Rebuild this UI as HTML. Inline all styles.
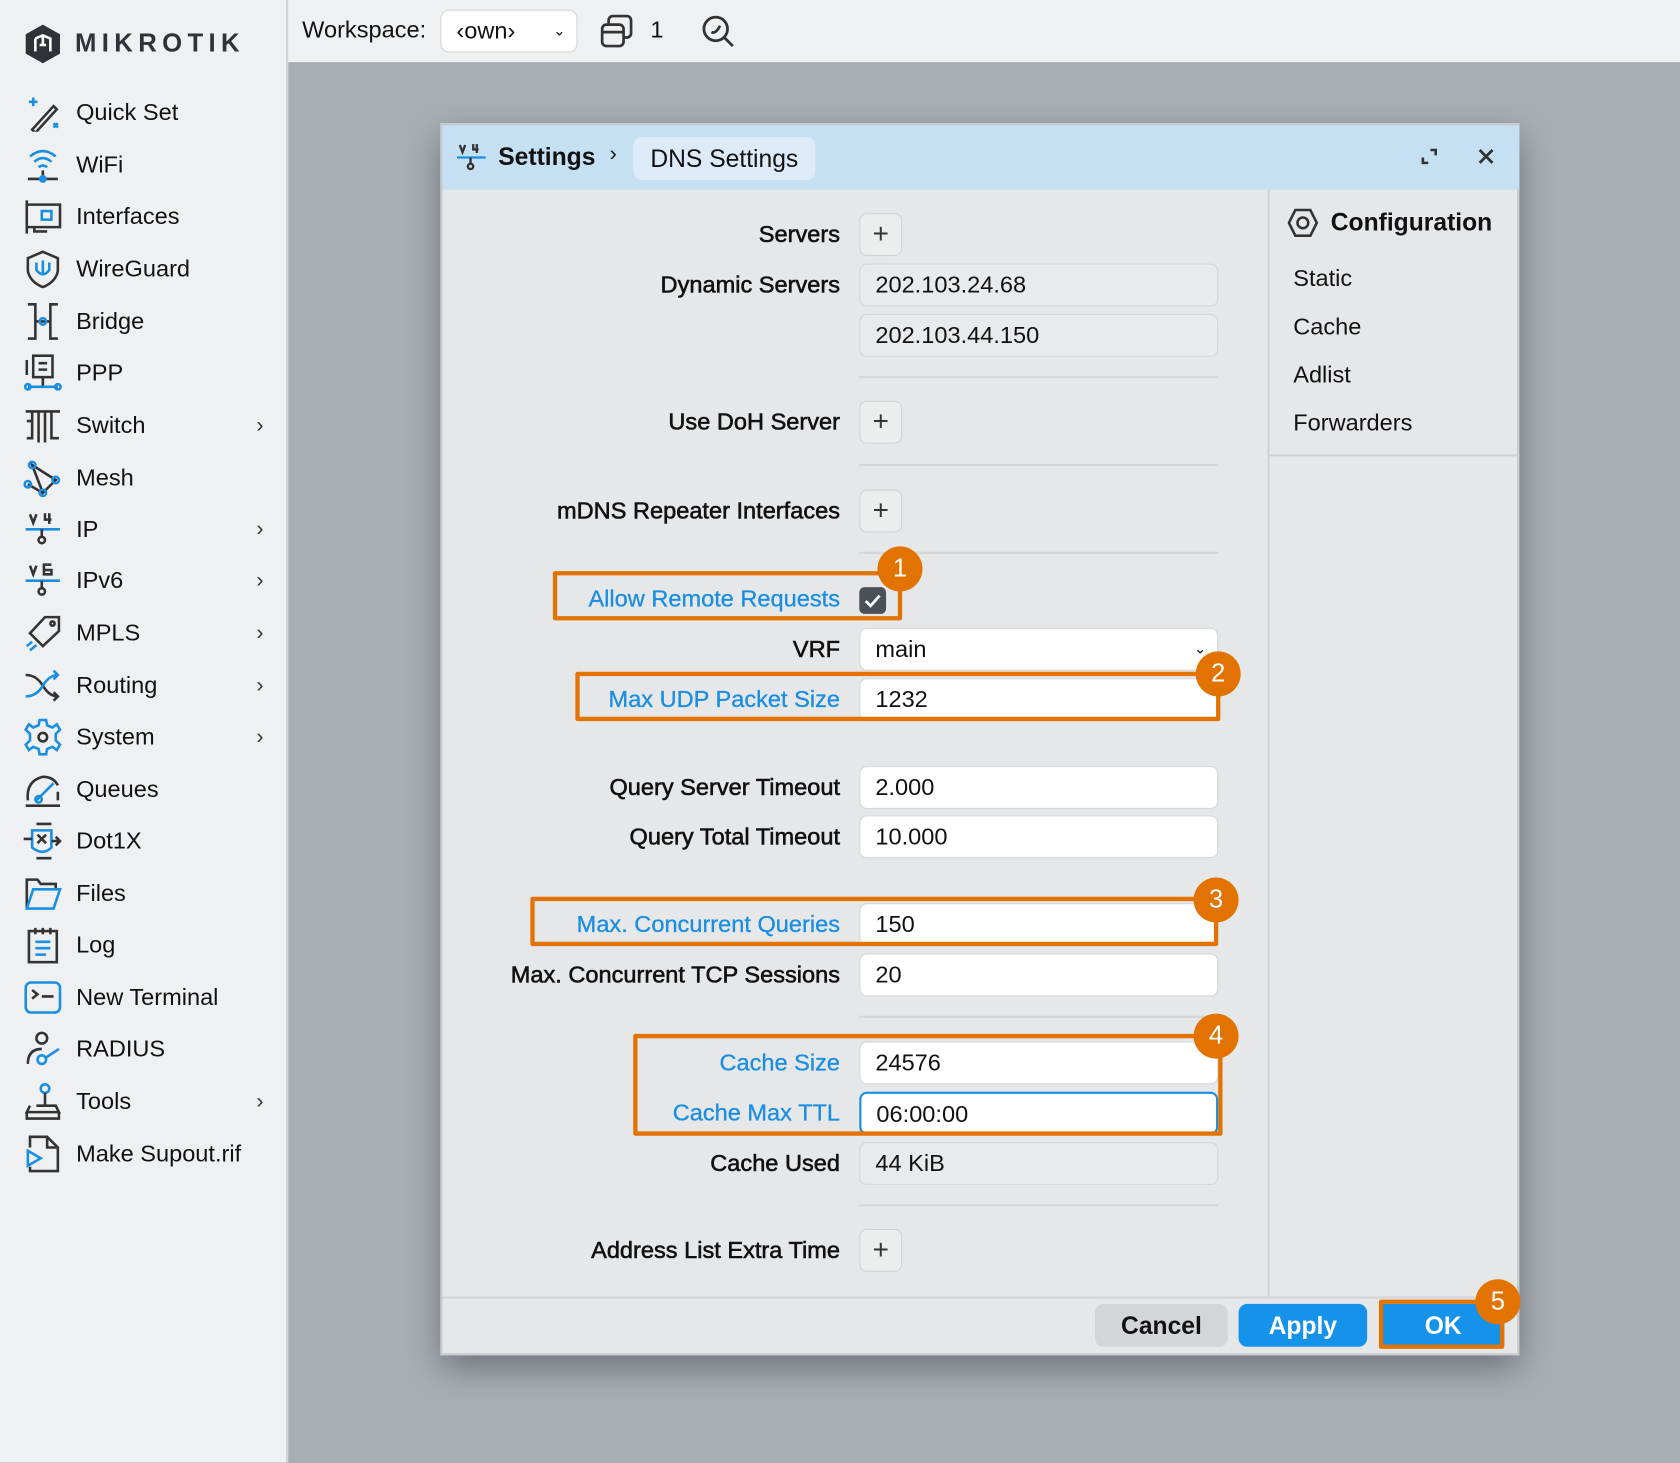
<!DOCTYPE html>
<html><head><meta charset="utf-8"><style>
*{box-sizing:border-box;margin:0;padding:0}
html,body{width:1680px;height:1462px;overflow:hidden;background:#a9aeb5}
#s{position:absolute;left:0;top:0;width:1568px;height:1365px;transform:scale(1.07143);transform-origin:0 0;font-family:"Liberation Sans",sans-serif;color:#111}
.a{position:absolute}
#side{left:0;top:0;width:269px;height:1365px;background:#eff0f2;border-right:2px solid #d0d3d7}
#top{left:269px;top:0;width:1299px;height:58px;background:#eff0f2}
.it{position:absolute;left:22px;height:40px;width:240px;font-size:22px;line-height:40px}
.it svg{position:absolute;left:0;top:2px;width:36px;height:36px}
.it span{position:absolute;left:49px}
.it i{position:absolute;right:16px;font-style:normal;font-size:20px;color:#333}
#dlg{left:411px;top:115px;width:1007px;height:1150px;background:#e6e7e9;border:2px solid #c8cacd;box-shadow:0 12px 30px rgba(0,0,0,.35)}
#hdr{left:0;top:0;width:1005px;height:60px;background:#c5dff3}
.lb{position:absolute;right:632px;font-size:22px;height:40px;line-height:40px;white-space:nowrap;-webkit-text-stroke:.55px #111}
.lb.b{color:#1a8ee0;-webkit-text-stroke:.3px #1a8ee0}
.in{position:absolute;left:389px;width:335px;height:40px;border:1.5px solid #d4d6d9;border-radius:7px;background:#fff;font-size:22px;line-height:37px;padding-left:14px}
.in.ro{background:#e9eaec}
.pl{position:absolute;left:389px;width:40px;height:40px;border:1.5px solid #d0d2d5;border-radius:7px;background:#eceded;font-size:26px;line-height:36px;text-align:center;color:#333}
.hr{position:absolute;left:389px;width:335px;height:2px;background:#d3d5d8}
.ob{position:absolute;border:4px solid #e27300;border-radius:2px}
.oc{position:absolute;width:42px;height:42px;border-radius:50%;background:#e27300;color:#fff;font-size:24px;text-align:center;line-height:42px}
.rt{position:absolute;left:794px;font-size:22px}
.bt{position:absolute;top:1100px;height:40px;border-radius:8px;font-size:23px;font-weight:bold;text-align:center;line-height:40px}
</style></head><body><div id="s">
<div id="side" class="a">
 <svg class="a" style="left:22px;top:22px" width="36" height="38" viewBox="0 0 36 38"><path d="M18 1 L34 10 V28 L18 37 L2 28 V10Z" fill="#2f3338"/><path d="M11 14 L18 11 L25 14 V26 M11 14 V26 M18 11 V20 M15 20 H21" stroke="#fff" stroke-width="2.4" fill="none"/></svg>
 <div class="a" style="left:70px;top:27px;font-size:24px;font-weight:bold;letter-spacing:5px;color:#2f3338">MIKROTIK</div>
</div>
<div id="top" class="a">
 <div class="a" style="left:13px;top:15px;font-size:22px">Workspace:</div>
 <div class="a" style="left:142px;top:9px;width:128px;height:40px;background:#fff;border:1.5px solid #d4d6d9;border-radius:8px;font-size:22px;line-height:37px;padding-left:14px">‹own›<span style="position:absolute;right:10px;font-size:14px">⌄</span></div>
 <svg class="a" style="left:290px;top:12px" width="34" height="34" viewBox="0 0 34 34" fill="none" stroke="#333" stroke-width="2.5"><rect x="3" y="11" width="20" height="20" rx="4"/><path d="M9 11 V7 a4 4 0 0 1 4-4 H26 a4 4 0 0 1 4 4 V19 a4 4 0 0 1-4 4 H23 M3 18 H23"/></svg>
 <div class="a" style="left:338px;top:15px;font-size:22px">1</div>
 <svg class="a" style="left:385px;top:13px" width="34" height="34" viewBox="0 0 34 34" fill="none" stroke="#333" stroke-width="2.6"><circle cx="14" cy="14" r="11"/><path d="M22 22 L30 30 M10 17 Q14 19 18 11"/></svg>
</div>

<div class="it" style="top:85px"><svg viewBox="0 0 36 36" fill="none" stroke="#333" stroke-width="2.4"><path d="M8 34 L28 12 L31 15 L11 37Z"/><path d="M9 4 v8 M5 8 h8" stroke="#1a8ee0"/><path d="M28 28 l4 4 M32 28 l-4 4" stroke="#1a8ee0"/></svg><span>Quick Set</span></div>
<div class="it" style="top:134px"><svg viewBox="0 0 36 36" fill="none" stroke="#1a8ee0" stroke-width="2.4"><path d="M6 10 Q18 0 30 10 M10 15 Q18 8 26 15 M14 20 Q18 17 22 20"/><path d="M18 23 V34 M4 31 H32" stroke="#333"/><circle cx="18" cy="31" r="2.5" fill="#1a8ee0"/></svg><span>WiFi</span></div>
<div class="it" style="top:182px"><svg viewBox="0 0 36 36" fill="none" stroke="#333" stroke-width="2.4"><path d="M3 3 V34 M3 7 H34 V28 H3 M10 28 V32 H22"/><rect x="17" y="13" width="9" height="8" stroke="#1a8ee0"/></svg><span>Interfaces</span></div>
<div class="it" style="top:231px"><svg viewBox="0 0 36 36" fill="none" stroke="#333" stroke-width="2.4"><path d="M18 2 L32 8 V20 Q30 30 18 35 Q6 30 4 20 V8Z"/><path d="M12 12 V19 Q18 27 24 19 V12 M18 10 V24" stroke="#1a8ee0"/></svg><span>WireGuard</span></div>
<div class="it" style="top:280px"><svg viewBox="0 0 36 36" fill="none" stroke="#333" stroke-width="2.4"><path d="M4 2 H11 V34 H4 M32 2 H25 V34 H32 M11 18 H25"/><circle cx="18" cy="18" r="3" stroke="#1a8ee0"/></svg><span>Bridge</span></div>
<div class="it" style="top:328px"><svg viewBox="0 0 36 36" fill="none" stroke="#333" stroke-width="2.4"><rect x="9" y="2" width="18" height="20"/><path d="M14 9 H22 M14 15 H22 M3 6 V20 M18 22 V30" /><path d="M4 31 H32" stroke="#1a8ee0"/><circle cx="4" cy="31" r="2.5" stroke="#1a8ee0"/><circle cx="32" cy="31" r="2.5" stroke="#1a8ee0"/></svg><span>PPP</span></div>
<div class="it" style="top:377px"><svg viewBox="0 0 36 36" fill="none" stroke="#333" stroke-width="2.4"><path d="M2 5 H34 M3 14 H8 V5 M8 14 V30 H3 M14 5 V34 M20 5 V34 M26 5 V30 H33"/></svg><span>Switch</span><i>›</i></div>
<div class="it" style="top:426px"><svg viewBox="0 0 36 36" fill="none" stroke="#1a8ee0" stroke-width="2.4"><path d="M8 6 L30 20 L18 32 Z M4 24 L18 32" stroke="#333"/><circle cx="8" cy="6" r="3"/><circle cx="30" cy="20" r="3"/><circle cx="18" cy="32" r="3"/><circle cx="4" cy="24" r="3"/></svg><span>Mesh</span></div>
<div class="it" style="top:474px"><svg viewBox="0 0 36 36" fill="none" stroke="#333" stroke-width="2.4"><path d="M6 4 L9 12 L12 4 M20 3 V9 H26 M24 3 V13"/><path d="M2 18 H34" stroke="#1a8ee0"/><path d="M17 18 V25"/><circle cx="17" cy="28" r="3"/></svg><span>IP</span><i>›</i></div>
<div class="it" style="top:522px"><svg viewBox="0 0 36 36" fill="none" stroke="#333" stroke-width="2.4"><path d="M6 4 L9 12 L12 4 M26 3 H19 V12 H26 V8 H19"/><path d="M2 18 H34" stroke="#1a8ee0"/><path d="M17 18 V25"/><circle cx="17" cy="28" r="3"/></svg><span>IPv6</span><i>›</i></div>
<div class="it" style="top:571px"><svg viewBox="0 0 36 36" fill="none" stroke="#333" stroke-width="2.4"><path d="M20 3 H33 V16 L18 30 L6 18Z"/><circle cx="27" cy="9" r="2"/><path d="M3 30 L8 26 M6 34 L12 29" stroke="#1a8ee0"/></svg><span>MPLS</span><i>›</i></div>
<div class="it" style="top:620px"><svg viewBox="0 0 36 36" fill="none" stroke-width="2.4"><path d="M2 8 Q12 8 18 18 Q24 28 32 28 M28 24 L32 28 L28 32" stroke="#333"/><path d="M2 28 Q12 28 18 18 Q24 8 32 8 M28 4 L32 8 L28 12" stroke="#1a8ee0"/></svg><span>Routing</span><i>›</i></div>
<div class="it" style="top:668px"><svg viewBox="0 0 36 36" fill="none" stroke="#1a8ee0" stroke-width="2.4"><path d="M15 2 H21 L22 7 L27 9 L31 6 L34 11 L30 15 V21 L34 25 L31 30 L27 27 L22 29 L21 34 H15 L14 29 L9 27 L5 30 L2 25 L6 21 V15 L2 11 L5 6 L9 9 L14 7Z"/><circle cx="18" cy="18" r="4" stroke="#333"/></svg><span>System</span><i>›</i></div>
<div class="it" style="top:717px"><svg viewBox="0 0 36 36" fill="none" stroke="#333" stroke-width="2.4"><path d="M4 28 Q2 10 18 6 Q28 6 32 14 M32 20 V28 M2 33 H34"/><path d="M12 28 L28 12" stroke="#1a8ee0"/><circle cx="14" cy="27" r="3" stroke="#1a8ee0"/></svg><span>Queues</span></div>
<div class="it" style="top:765px"><svg viewBox="0 0 36 36" fill="none" stroke="#333" stroke-width="2.4"><path d="M8 8 H26 V24 Q18 32 8 24Z" stroke="#1a8ee0"/><path d="M13 12 L21 20 M21 12 L13 20 M0 16 H8 M26 18 H34 M30 14 L34 18 L30 22 M12 2 H26 M12 34 H26" /></svg><span>Dot1X</span></div>
<div class="it" style="top:814px"><svg viewBox="0 0 36 36" fill="none" stroke-width="2.4"><path d="M3 32 V5 H13 L16 9 H30 V14" stroke="#333"/><path d="M3 32 L9 14 H34 L28 32Z" stroke="#1a8ee0"/></svg><span>Files</span></div>
<div class="it" style="top:862px"><svg viewBox="0 0 36 36" fill="none" stroke="#333" stroke-width="2.4"><rect x="5" y="5" width="26" height="29"/><path d="M11 2 V8 M18 2 V8 M25 2 V8"/><path d="M11 15 H25 M11 21 H25 M11 27 H21" stroke="#1a8ee0"/></svg><span>Log</span></div>
<div class="it" style="top:911px"><svg viewBox="0 0 36 36" fill="none" stroke="#1a8ee0" stroke-width="2.4"><rect x="2" y="4" width="32" height="28" rx="5"/><path d="M8 11 L13 15 L8 19 M17 17 H28" stroke="#333"/></svg><span>New Terminal</span></div>
<div class="it" style="top:959px"><svg viewBox="0 0 36 36" fill="none" stroke="#333" stroke-width="2.4"><circle cx="17" cy="8" r="5"/><path d="M4 32 Q4 18 17 18"/><circle cx="17" cy="28" r="4" stroke="#1a8ee0"/><path d="M21 26 L33 18" stroke="#1a8ee0"/></svg><span>RADIUS</span></div>
<div class="it" style="top:1008px"><svg viewBox="0 0 36 36" fill="none" stroke="#333" stroke-width="2.4"><circle cx="20" cy="6" r="4" stroke="#1a8ee0"/><path d="M20 10 V22 M12 22 H30 L33 28 H3 L6 22 M3 28 V34 H33 V28"/></svg><span>Tools</span><i>›</i></div>
<div class="it" style="top:1057px"><svg viewBox="0 0 36 36" fill="none" stroke="#333" stroke-width="2.4"><path d="M6 12 V2 H22 L32 12 V34 H6 V30 M22 2 V12 H32"/><path d="M4 15 L16 22 L4 29Z" stroke="#1a8ee0"/></svg><span>Make Supout.rif</span></div>

<div id="dlg" class="a">
 <div id="hdr" class="a">
  <svg class="a" style="left:12px;top:14px" width="30" height="32" viewBox="0 0 36 36" fill="none" stroke="#333" stroke-width="2.6"><path d="M5 4 L8 12 L11 4 M20 3 V9 H26 M24 3 V13"/><path d="M2 18 H34" stroke="#1a8ee0"/><path d="M17 18 V25"/><circle cx="17" cy="28" r="3"/></svg>
  <div class="a" style="left:52px;top:16px;font-size:23px;font-weight:bold">Settings</div>
  <div class="a" style="left:156px;top:16px;font-size:20px">›</div>
  <div class="a" style="left:178px;top:11px;width:170px;height:40px;background:#dcebf7;border-radius:8px;font-size:23px;line-height:40px;text-align:center">DNS Settings</div>
  <svg class="a" style="left:912px;top:20px" width="18" height="18" viewBox="0 0 18 18" fill="none" stroke="#333" stroke-width="2.4"><path d="M10 3 H15 V8 M8 15 H3 V10"/></svg>
  <svg class="a" style="left:965px;top:20px" width="18" height="18" viewBox="0 0 18 18" stroke="#333" stroke-width="2.6"><path d="M3 3 L15 15 M15 3 L3 15"/></svg>
 </div>
 <div class="a" style="left:770px;top:60px;width:2px;height:1034px;background:#d0d2d5"></div>
 <div class="a" style="left:772px;top:307px;width:233px;height:2px;background:#d0d2d5"></div>
 <div class="a" style="left:0;top:1093px;width:1005px;height:2px;background:#d3d5d8"></div>
 <svg class="a" style="left:788px;top:77px" width="30" height="28" viewBox="0 0 30 28" fill="none" stroke="#333" stroke-width="2.4"><path d="M8 2 H22 L28 14 L22 26 H8 L2 14Z"/><circle cx="15" cy="14" r="5"/></svg>
 <div class="a" style="left:829px;top:77px;font-size:23px;font-weight:bold">Configuration</div>
 <div class="rt" style="top:130px">Static</div>
 <div class="rt" style="top:175px">Cache</div>
 <div class="rt" style="top:220px">Adlist</div>
 <div class="rt" style="top:265px">Forwarders</div>

 <div class="lb" style="top:82px">Servers</div><div class="pl" style="top:82px">+</div>
 <div class="lb" style="top:129px">Dynamic Servers</div><div class="in ro" style="top:129px">202.103.24.68</div>
 <div class="in ro" style="top:176px">202.103.44.150</div>
 <div class="hr" style="top:234px"></div>
 <div class="lb" style="top:257px">Use DoH Server</div><div class="pl" style="top:257px">+</div>
 <div class="hr" style="top:316px"></div>
 <div class="lb" style="top:340px">mDNS Repeater Interfaces</div><div class="pl" style="top:340px">+</div>
 <div class="hr" style="top:398px"></div>
 <div class="lb b" style="top:422px">Allow Remote Requests</div>
 <div class="a" style="left:389px;top:431px;width:25px;height:25px;background:#4a5058;border-radius:5px"><svg width="25" height="25" viewBox="0 0 25 25" fill="none" stroke="#fff" stroke-width="2.6"><path d="M6 13 L10.5 17.5 L19 8"/></svg></div>
 <div class="lb" style="top:469px">VRF</div><div class="in" style="top:469px">main<span style="position:absolute;right:10px;font-size:14px">⌄</span></div>
 <div class="lb b" style="top:516px">Max UDP Packet Size</div><div class="in" style="top:516px">1232</div>
 <div class="lb" style="top:598px">Query Server Timeout</div><div class="in" style="top:598px">2.000</div>
 <div class="lb" style="top:644px">Query Total Timeout</div><div class="in" style="top:644px">10.000</div>
 <div class="lb b" style="top:726px">Max. Concurrent Queries</div><div class="in" style="top:726px">150</div>
 <div class="lb" style="top:773px">Max. Concurrent TCP Sessions</div><div class="in" style="top:773px">20</div>
 <div class="hr" style="top:831px"></div>
 <div class="lb b" style="top:855px">Cache Size</div><div class="in" style="top:855px">24576</div>
 <div class="lb b" style="top:902px">Cache Max TTL</div><div class="in" style="top:902px;border:2px solid #1a8ee0">06:00:00</div>
 <div class="lb" style="top:949px">Cache Used</div><div class="in ro" style="top:949px">44 KiB</div>
 <div class="hr" style="top:1007px"></div>
 <div class="lb" style="top:1030px">Address List Extra Time</div><div class="pl" style="top:1030px">+</div>

 <div class="bt" style="left:609px;width:124px;background:#d3d5d8;color:#111">Cancel</div>
 <div class="bt" style="left:743px;width:120px;background:#1592ea;color:#fff">Apply</div>
 <div class="bt" style="left:877px;width:114px;background:#1592ea;color:#fff;border-radius:2px">OK</div>
</div>

<div class="ob" style="left:516px;top:533px;width:326px;height:46px"></div>
<div class="oc" style="left:819px;top:510px">1</div>
<div class="ob" style="left:537px;top:627px;width:602px;height:46px"></div>
<div class="oc" style="left:1116px;top:608px">2</div>
<div class="ob" style="left:495px;top:837px;width:642px;height:46px"></div>
<div class="oc" style="left:1114px;top:819px">3</div>
<div class="ob" style="left:591px;top:965px;width:550px;height:95px"></div>
<div class="oc" style="left:1114px;top:946px">4</div>
<div class="ob" style="left:1287px;top:1213px;width:117px;height:46px"></div>
<div class="oc" style="left:1377px;top:1194px">5</div>
</div></body></html>
